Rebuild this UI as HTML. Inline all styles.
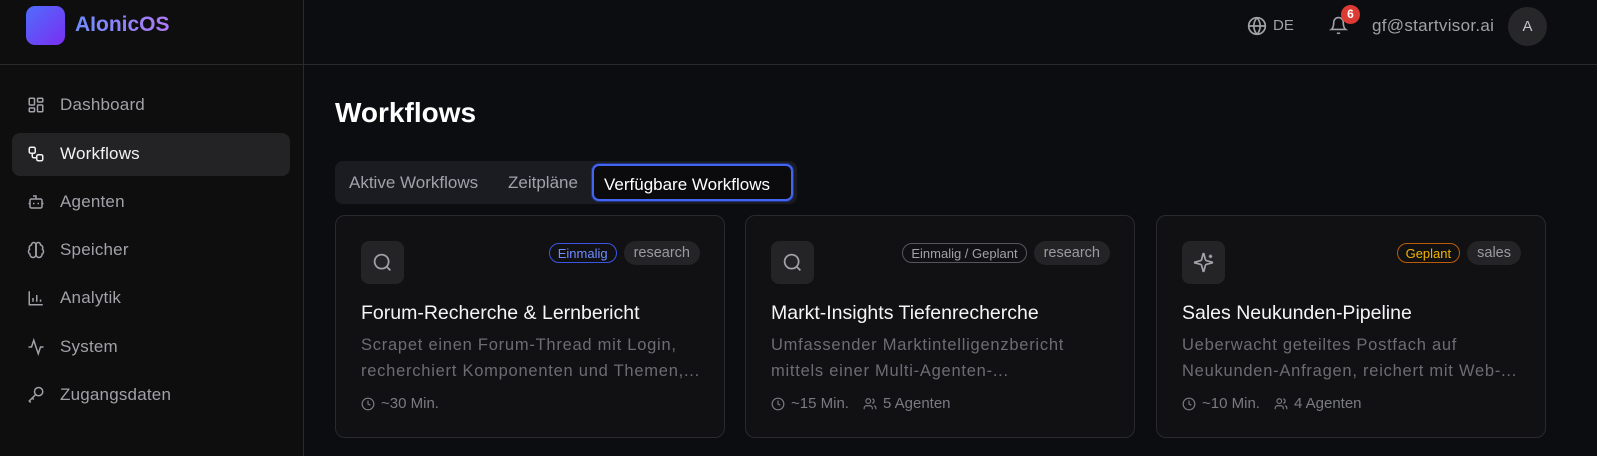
<!DOCTYPE html>
<html><head><meta charset="utf-8"><style>
*{box-sizing:border-box;margin:0;padding:0}
body{width:1597px;height:456px;overflow:hidden;background:#0c0d11;font-family:"Liberation Sans",sans-serif;color:#e5e5e7;position:relative}
.side{position:absolute;left:0;top:0;width:304px;height:456px;background:#0e0e0f;border-right:1px solid #2a2a2e}
.hline{position:absolute;left:0;top:64px;width:1597px;height:1px;background:#2a2a2e}
.logo{position:absolute;left:26px;top:6px;width:39px;height:39px;border-radius:9px;background:linear-gradient(135deg,#4f6dfc,#7a2ef2)}
.brand{position:absolute;left:75px;top:13px;font-size:21px;font-weight:bold;background:linear-gradient(90deg,#6f8cff,#b07af5);-webkit-background-clip:text;color:transparent}
.nav{position:absolute;left:12px;width:278px;height:43px;border-radius:8px;font-size:17px;letter-spacing:0.2px;color:#a1a1a8}
.nav.act{background:#232325;color:#f2f2f4}
.nav svg{position:absolute;left:15px;top:12px}
.nav span{position:absolute;left:48px;top:11px}
h1{position:absolute;left:335px;top:97px;font-size:28px;font-weight:bold;color:#fff}
.tabs{position:absolute;left:335px;top:161px;width:462px;height:43px;background:#1a1c22;border-radius:8px;font-size:17px;color:#a1a1aa}
.tabs span{position:absolute;top:12px;white-space:nowrap}
.tab-a{position:absolute;left:257px;top:3px;width:201px;height:37px;border:2px solid #4466ee;border-radius:7px;background:#0b0b0e;color:#fff;box-shadow:0 0 0 1px #22338a}
.card{position:absolute;top:215px;width:390px;height:223px;background:#111114;border:1px solid #2a2a2e;border-radius:10px}
.ib{position:absolute;left:25px;top:25px;width:43px;height:43px;background:#242427;border-radius:8px}
.ib svg{position:absolute;left:11px;top:11px}
.ct{position:absolute;left:25px;top:86px;font-size:19.5px;color:#f5f5f7}
.cd{position:absolute;left:25px;top:116px;width:345px;font-size:16.5px;letter-spacing:0.75px;line-height:26px;color:#6c6c73;white-space:nowrap}
.cf{position:absolute;left:25px;top:179px;font-size:15px;color:#7a7a82;display:flex;align-items:center}
.cf svg{margin-right:6px}
.tags{position:absolute;right:24px;top:25px;display:flex;gap:7px;align-items:center}
.b{font-size:13px;padding:2px 8px;border-radius:10px;height:20px;line-height:15px}
.tg{font-size:14.5px;padding:0 10px;border-radius:12px;background:#242427;color:#9a9aa2;height:24px;line-height:24px}
.hdr{position:absolute;top:0;height:52px;font-size:17px;color:#a1a1a8}
</style></head><body>
<div class="side">
<div class="logo"></div><div class="brand">AIonicOS</div>
<div class="nav" style="top:84px"><svg width="18" height="18" viewBox="0 0 24 24" fill="none" stroke="#a1a1a8" stroke-width="2"><rect x="3" y="3" width="7" height="9" rx="1"/><rect x="14" y="3" width="7" height="5" rx="1"/><rect x="14" y="12" width="7" height="9" rx="1"/><rect x="3" y="16" width="7" height="5" rx="1"/></svg><span>Dashboard</span></div>
<div class="nav act" style="top:133px"><svg width="18" height="18" viewBox="0 0 24 24" fill="none" stroke="#f2f2f4" stroke-width="2"><rect x="3" y="3" width="8" height="8" rx="2"/><rect x="13" y="13" width="8" height="8" rx="2"/><path d="M7 11v4a2 2 0 0 0 2 2h4"/></svg><span>Workflows</span></div>
<div class="nav" style="top:181px"><svg width="18" height="18" viewBox="0 0 24 24" fill="none" stroke="#a1a1a8" stroke-width="2"><path d="M12 8V4H8"/><rect x="4" y="8" width="16" height="12" rx="2"/><path d="M2 14h2M20 14h2M15 13v2M9 13v2"/></svg><span>Agenten</span></div>
<div class="nav" style="top:229px"><svg width="18" height="18" viewBox="0 0 24 24" fill="none" stroke="#a1a1a8" stroke-width="2"><path d="M12 5a3 3 0 1 0-5.997.125 4 4 0 0 0-2.526 5.77 4 4 0 0 0 .556 6.588A4 4 0 1 0 12 18Z"/><path d="M12 5a3 3 0 1 1 5.997.125 4 4 0 0 1 2.526 5.77 4 4 0 0 1-.556 6.588A4 4 0 1 1 12 18Z"/><path d="M12 5v13"/></svg><span>Speicher</span></div>
<div class="nav" style="top:277px"><svg width="18" height="18" viewBox="0 0 24 24" fill="none" stroke="#a1a1a8" stroke-width="2"><path d="M3 3v18h18M8 17v-5M13 17V8M18 17v-3"/></svg><span>Analytik</span></div>
<div class="nav" style="top:326px"><svg width="18" height="18" viewBox="0 0 24 24" fill="none" stroke="#a1a1a8" stroke-width="2"><path d="M22 12h-4l-3 9L9 3l-3 9H2"/></svg><span>System</span></div>
<div class="nav" style="top:374px"><svg width="18" height="18" viewBox="0 0 24 24" fill="none" stroke="#a1a1a8" stroke-width="2"><circle cx="15.5" cy="7.5" r="5.5"/><path d="M11.5 11.5 3 20l2 2M7 16l2 2"/></svg><span>Zugangsdaten</span></div>
</div>
<div class="hline"></div>
<svg style="position:absolute;left:1247px;top:16px" width="20" height="20" viewBox="0 0 24 24" fill="none" stroke="#a1a1a8" stroke-width="2"><circle cx="12" cy="12" r="10"/><path d="M2 12h20M12 2a15 15 0 0 1 0 20M12 2a15 15 0 0 0 0 20"/></svg>
<div class="hdr" style="left:1273px;top:17px;font-size:15px">DE</div>
<svg style="position:absolute;left:1329px;top:16px" width="19" height="19" viewBox="0 0 24 24" fill="none" stroke="#a1a1a8" stroke-width="2"><path d="M6 8a6 6 0 0 1 12 0c0 7 3 9 3 9H3s3-2 3-9M10.3 21a1.94 1.94 0 0 0 3.4 0"/></svg>
<div style="position:absolute;left:1341px;top:5px;width:19px;height:19px;border-radius:50%;background:#dc3b33;color:#fff;font-size:12px;font-weight:bold;text-align:center;line-height:19px">6</div>
<div class="hdr" style="left:1372px;top:16px;letter-spacing:0.3px">gf@startvisor.ai</div>
<div style="position:absolute;left:1508px;top:7px;width:39px;height:39px;border-radius:50%;background:#27272a;color:#c4c4ca;font-size:15px;text-align:center;line-height:39px">A</div>
<h1>Workflows</h1>
<div class="tabs"><span style="left:14px">Aktive Workflows</span><span style="left:173px">Zeitpläne</span><div class="tab-a"><span style="left:10px;top:9px">Verfügbare Workflows</span></div></div>

<div class="card" style="left:335px">
<div class="ib"><svg width="21" height="21" viewBox="0 0 24 24" fill="none" stroke="#a1a1a8" stroke-width="2"><circle cx="11" cy="11" r="8"/><path d="m21 21-4.3-4.3"/></svg></div>
<div class="tags"><span class="b" style="border:1px solid #3b55e0;color:#6f8cff">Einmalig</span><span class="tg">research</span></div>
<div class="ct">Forum-Recherche &amp; Lernbericht</div>
<div class="cd">Scrapet einen Forum-Thread mit Login,<br>recherchiert Komponenten und Themen,...</div>
<div class="cf"><svg width="14" height="14" viewBox="0 0 24 24" fill="none" stroke="#7a7a82" stroke-width="2"><circle cx="12" cy="12" r="10"/><path d="M12 6v6l4 2"/></svg>~30 Min.</div>
</div>
<div class="card" style="left:745px">
<div class="ib"><svg width="21" height="21" viewBox="0 0 24 24" fill="none" stroke="#a1a1a8" stroke-width="2"><circle cx="11" cy="11" r="8"/><path d="m21 21-4.3-4.3"/></svg></div>
<div class="tags"><span class="b" style="border:1px solid #55555c;color:#a1a1a8">Einmalig / Geplant</span><span class="tg">research</span></div>
<div class="ct">Markt-Insights Tiefenrecherche</div>
<div class="cd">Umfassender Marktintelligenzbericht<br>mittels einer Multi-Agenten-...</div>
<div class="cf"><svg width="14" height="14" viewBox="0 0 24 24" fill="none" stroke="#7a7a82" stroke-width="2"><circle cx="12" cy="12" r="10"/><path d="M12 6v6l4 2"/></svg>~15 Min.<svg style="margin-left:14px" width="14" height="14" viewBox="0 0 24 24" fill="none" stroke="#7a7a82" stroke-width="2"><path d="M16 21v-2a4 4 0 0 0-4-4H6a4 4 0 0 0-4 4v2"/><circle cx="9" cy="7" r="4"/><path d="M22 21v-2a4 4 0 0 0-3-3.870M16 3.13a4 4 0 0 1 0 7.75"/></svg>5 Agenten</div>
</div>
<div class="card" style="left:1156px">
<div class="ib"><svg width="21" height="21" viewBox="0 0 24 24" fill="none" stroke="#a1a1a8" stroke-width="2"><path d="M9.9 15.5A2 2 0 0 0 8.5 14.1L2.4 12.5a.5.5 0 0 1 0-1L8.5 9.9A2 2 0 0 0 9.9 8.5L11.5 2.4a.5.5 0 0 1 1 0l1.6 6.1a2 2 0 0 0 1.4 1.4l6.1 1.6a.5.5 0 0 1 0 1l-6.1 1.6a2 2 0 0 0-1.4 1.4l-1.6 6.1a.5.5 0 0 1-1 0z"/><path d="M20 3v4M22 5h-4"/></svg></div>
<div class="tags"><span class="b" style="border:1px solid #b85c0a;color:#f0b400">Geplant</span><span class="tg">sales</span></div>
<div class="ct">Sales Neukunden-Pipeline</div>
<div class="cd">Ueberwacht geteiltes Postfach auf<br>Neukunden-Anfragen, reichert mit Web-...</div>
<div class="cf"><svg width="14" height="14" viewBox="0 0 24 24" fill="none" stroke="#7a7a82" stroke-width="2"><circle cx="12" cy="12" r="10"/><path d="M12 6v6l4 2"/></svg>~10 Min.<svg style="margin-left:14px" width="14" height="14" viewBox="0 0 24 24" fill="none" stroke="#7a7a82" stroke-width="2"><path d="M16 21v-2a4 4 0 0 0-4-4H6a4 4 0 0 0-4 4v2"/><circle cx="9" cy="7" r="4"/><path d="M22 21v-2a4 4 0 0 0-3-3.87M16 3.13a4 4 0 0 1 0 7.75"/></svg>4 Agenten</div>
</div>
</body></html>
